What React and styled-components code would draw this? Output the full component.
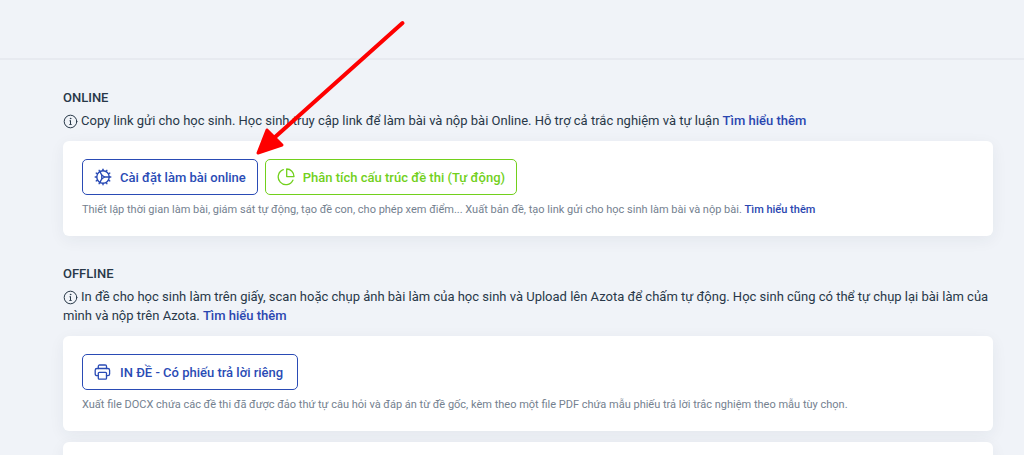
import React from "react";
import styled, { createGlobalStyle } from "styled-components";

const GlobalStyle = createGlobalStyle`
    * {
        box-sizing: border-box;
    }

    body {
        margin: 0;
        overflow: hidden;
        background-color: #f0f3f8;
        color: #283848;
        font-family: Roboto, "Liberation Sans", sans-serif;
        font-size: 13px;
        line-height: 19px;
    }
`

const Page = styled.div`
    position: relative;
`

const TopBar = styled.header`
    height: 60px;
    border-bottom: 2px solid #e7eaf0;
`

const Content = styled.main`
    padding: 28px 31px 0 63px;
`

const Section = styled.section`
    margin-bottom: 28px;
`

const Title = styled.h2`
    margin: 0 0 3px;
    font-size: 13px;
    font-weight: 500;
    line-height: 20px;
`

const Intro = styled.p`
    margin: 0 0 11px;

    & svg {
        margin-right: 3px;
        vertical-align: -4px;
    }
`

const MoreLink = styled.a`
    color: #2a46b0;
    font-weight: 500;
    text-decoration: none;
`

const Card = styled.div`
    min-height: 95px;
    margin-bottom: 11px;
    padding: 18px 19px;
    background-color: #fff;
    border-radius: 6px;
    box-shadow: 0 4px 16px rgba(40, 56, 72, 0.06);
`

const Actions = styled.div`
    display: flex;
    gap: 7px;
`

const ActionButton = styled.button`
    display: flex;
    align-items: center;
    gap: 8px;
    height: 36px;
    padding: 0 ${(props) => (props.$roomy ? 14 : 11)}px 0 11px;
    background-color: #fff;
    border: 1px solid ${(props) => props.$color};
    border-radius: 5px;
    color: ${(props) => props.$color};
    font: inherit;
    font-weight: 500;
    cursor: pointer;
`

const Icon = styled.svg`
    width: ${(props) => props.$size}px;
    height: ${(props) => props.$size}px;
    fill: none;
    stroke: currentColor;
    stroke-linecap: round;
    stroke-linejoin: round;
`

const Note = styled.p`
    margin: 7px 0 0;
    color: #74818f;
    font-size: 11px;
    line-height: 16px;
`

// red pointer drawn over the page
const Pointer = styled.svg`
    position: absolute;
    top: 20px;
    left: 254px;
    width: 154px;
    height: 138px;
    pointer-events: none;
`

const blue = "#2a4bb5"
const green = "#72d01c"

function InfoIcon() {
    return (
        <Icon $size={15} viewBox="0 0 15 15" aria-hidden="true">
            <circle cx="7.5" cy="7.5" r="6.3" />
            <path d="M7.500 6.800v3.500" />
            <path d="M6.700 6.800h0.800M6.500 10.500h2" strokeWidth="0.700" />
            <circle cx="7.500" cy="4.500" r="0.300" fill="currentColor" />
        </Icon>
    )
}

function CogIcon() {
    const teeth = Array.from({ length: 12 }, (_, i) => i * 30)

    return (
        <Icon $size={18} viewBox="0 0 18 18" strokeWidth="1.400" aria-hidden="true">
            <circle cx="9" cy="9" r="6.200" />
            {teeth.map((angle) => (
                <path key={angle} d="M9 2.500V1.200" transform={`rotate(${angle} 9 9)`} />
            ))}
            <path d="M10.500 9h4.700M7.700 7L5.900 3.700M7.700 11l-1.800 3.300" />
            <path d="M7.700 7L10.500 9L7.700 11Z" strokeWidth="1.200" />
        </Icon>
    )
}

function PieIcon() {
    return (
        <Icon $size={18} viewBox="0 0 18 18" strokeWidth="1.300" aria-hidden="true">
            <path d="M6.300 1.700A7.700 7.700 0 1 0 15.900 12.200" />
            <path d="M9.700 1v7.600h7.300a7.300 7.600 0 0 0-7.300-7.600z" />
        </Icon>
    )
}

function PrintIcon() {
    return (
        <Icon $size={18} viewBox="0 0 18 18" strokeWidth="1.300" aria-hidden="true">
            <path d="M4.300 12.700H3a1.800 1.800 0 0 1-1.800-1.800V7.300A1.800 1.800 0 0 1 3 5.500h10.800a1.800 1.800 0 0 1 1.800 1.800v3.600a1.800 1.800 0 0 1-1.800 1.800h-1.300" />
            <path d="M4.300 5.500V3.300a1.300 1.300 0 0 1 1.300-1.300h5.600a1.300 1.300 0 0 1 1.300 1.300v2.200" />
            <rect x="4.300" y="9.300" width="8.200" height="6.900" rx="1" />
        </Icon>
    )
}

function App() {

    return (
        <Page>
            <GlobalStyle />
            <TopBar />
            <Content>
                <Section>
                    <Title>ONLINE</Title>
                    <Intro>
                        <InfoIcon />
                        Copy link gửi cho học sinh. Học sinh truy cập link để làm bài và nộp bài Online. Hỗ trợ cả trắc nghiệm và tự luận <MoreLink href="#online">Tìm hiểu thêm</MoreLink>
                    </Intro>
                    <Card>
                        <Actions>
                            <ActionButton type="button" $color={blue}>
                                <CogIcon />
                                Cài đặt làm bài online
                            </ActionButton>
                            <ActionButton type="button" $color={green}>
                                <PieIcon />
                                Phân tích cấu trúc đề thi (Tự động)
                            </ActionButton>
                        </Actions>
                        <Note>
                            Thiết lập thời gian làm bài, giám sát tự động, tạo đề con, cho phép xem điểm... Xuất bản đề, tạo link gửi cho học sinh làm bài và nộp bài. <MoreLink href="#settings">Tìm hiểu thêm</MoreLink>
                        </Note>
                    </Card>
                </Section>
                <Section>
                    <Title>OFFLINE</Title>
                    <Intro>
                        <InfoIcon />
                        In đề cho học sinh làm trên giấy, scan hoặc chụp ảnh bài làm của học sinh và Upload lên Azota để chấm tự động. Học sinh cũng có thể tự chụp lại bài làm của mình và nộp trên Azota. <MoreLink href="#offline">Tìm hiểu thêm</MoreLink>
                    </Intro>
                    <Card>
                        <Actions>
                            <ActionButton type="button" $color={blue} $roomy>
                                <PrintIcon />
                                IN ĐỀ - Có phiếu trả lời riêng
                            </ActionButton>
                        </Actions>
                        <Note>
                            Xuất file DOCX chứa các đề thi đã được đảo thứ tự câu hỏi và đáp án từ đề gốc, kèm theo một file PDF chứa mẫu phiếu trả lời trắc nghiệm theo mẫu tùy chọn.
                        </Note>
                    </Card>
                    <Card />
                </Section>
            </Content>
            <Pointer viewBox="0 0 154 138" aria-hidden="true">
                <path d="M148.500 3 L20 118" stroke="#fe0000" strokeWidth="4" strokeLinecap="round" />
                <path d="M4 133 L13 110 L28 125 Z" fill="#fe0000" stroke="#fe0000" strokeWidth="3" strokeLinejoin="round" />
            </Pointer>
        </Page>
    )
}

export default App;
